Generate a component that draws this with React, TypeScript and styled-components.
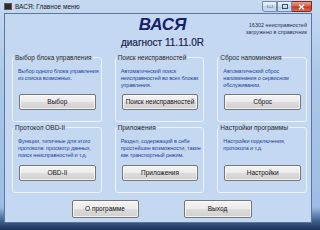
import React from 'react'
import styled, { createGlobalStyle } from 'styled-components'

const GlobalStyle = createGlobalStyle`
  html, body {
    margin: 0;
    padding: 0;
  }
  body {
    font-family: 'Liberation Sans', Arial, sans-serif;
  }
`

const Window = styled.div`
  width: 320px;
  height: 230px;
  box-sizing: border-box;
  display: grid;
  grid-template-rows: 13px 1fr;
  padding: 0 8px 7px 4px;
  overflow: hidden;
  background: linear-gradient(
    to bottom,
    #c6daf1 0%,
    #aac7e9 35%,
    #9dbde4 90%,
    #3f5f8f 96%,
    #1d3358 100%
  );
`

const TitleBar = styled.div`
  display: flex;
  align-items: center;
  gap: 3px;
  font-size: 6.5px;
  color: #1a1a1a;
`

const AppIcon = styled.span`
  width: 6px;
  height: 5px;
  background: #2b2b2b;
  border: 1px solid #5a5a5a;
`

const Caption = styled.span`
  flex: 1;
`

const Controls = styled.div`
  display: flex;
  align-self: flex-start;
  margin-top: 1px;
  height: 11px;
`

const ControlButton = styled.div<{ $w: number; $close?: boolean }>`
  width: ${({ $w }) => $w}px;
  box-sizing: border-box;
  display: flex;
  align-items: center;
  justify-content: center;
  border: 1px solid ${({ $close }) => ($close ? '#7a2a1e' : '#7089ab')};
  border-left-width: ${({ $close }) => ($close ? 0 : 1)}px;
  border-radius: ${({ $close }) => ($close ? '0 0 3px 0' : '0')};
  background: ${({ $close }) =>
    $close
      ? 'linear-gradient(to bottom, #e9a08f 0%, #d4644c 45%, #c23a22 55%, #d8705a 100%)'
      : 'linear-gradient(to bottom, #edf3fb 0%, #d3e1f3 45%, #b9cfea 55%, #cfe0f4 100%)'};
  &:first-child {
    border-left-width: 1px;
    border-radius: 0 0 0 3px;
  }
`

const Client = styled.div`
  background: #c5d8f1;
  border: 1px solid #5d7598;
  display: flex;
  flex-direction: column;
  padding: 0 4px 0 7px;
`

const Header = styled.div`
  height: 39.5px;
  display: grid;
  grid-template-columns: 1fr auto 1fr;
`

const TitleBlock = styled.div`
  grid-column: 2;
  display: flex;
  flex-direction: column;
  align-items: center;
  padding-left: 6px;
`

const AppName = styled.div`
  font-size: 17px;
  line-height: 17px;
  font-weight: bold;
  font-style: italic;
  color: #14206e;
  margin-top: 2px;
`

const Version = styled.div`
  font-size: 10px;
  line-height: 10px;
  color: #1b1f4f;
  margin-top: 5px;
  -webkit-text-stroke: 0.2px #1b1f4f;
`

const Info = styled.div`
  grid-column: 3;
  justify-self: end;
  text-align: right;
  font-size: 5.5px;
  line-height: 7px;
  color: #2a2f4a;
  margin-top: 7.5px;
  white-space: nowrap;
`

const Panels = styled.div`
  display: grid;
  grid-template-columns: repeat(3, 1fr);
  grid-template-rows: 68px 69px;
  column-gap: 13px;
  row-gap: 2px;
`

const Group = styled.fieldset`
  margin: 0;
  min-width: 0;
  box-sizing: border-box;
  border: 1px solid #edf3fc;
  border-radius: 3px;
  padding: 7px 4px 11px 5px;
  display: flex;
  flex-direction: column;
`

const Legend = styled.legend`
  font-size: 6.5px;
  line-height: 7px;
  color: #2a2a2a;
  padding: 0 1px;
  margin-left: -4px;
  white-space: nowrap;
`

const Description = styled.p`
  margin: 0;
  font-size: 5.5px;
  line-height: 7px;
  color: #2243a0;
  white-space: nowrap;
  letter-spacing: -0.1px;
`

const Button = styled.div<{ $w?: number; $h?: number }>`
  box-sizing: border-box;
  width: ${({ $w }) => ($w ? `${$w}px` : 'calc(100% - 2px)')};
  align-self: center;
  height: ${({ $h }) => $h || 16}px;
  margin-top: auto;
  display: flex;
  align-items: center;
  justify-content: center;
  font-size: 6.5px;
  color: #111;
  border: 1px solid #767676;
  border-radius: 2px;
  background: linear-gradient(to bottom, #f4f4f4 0%, #ebebeb 48%, #dcdcdc 52%, #d0d0d0 100%);
  box-shadow: inset 0 0 0 1px rgba(255, 255, 255, 0.7);
`

const Footer = styled.div`
  display: flex;
  justify-content: center;
  gap: 45px;
  margin-top: 7px;
  padding-left: 4px;
`

const groups = [
  {
    title: 'Выбор блока управления',
    text: ['Выбор одного блока управления', 'из списка возможных.'],
    button: 'Выбор',
  },
  {
    title: 'Поиск неисправностей',
    text: ['Автоматический поиск', 'неисправностей во всех блоках', 'управления.'],
    button: 'Поиск неисправностей',
  },
  {
    title: 'Сброс напоминания',
    text: ['Автоматический сброс', 'напоминания о сервисном', 'обслуживании.'],
    button: 'Сброс',
  },
  {
    title: 'Протокол OBD-II',
    text: ['Функции, типичные для этого', 'протокола: просмотр данных,', 'поиск неисправностей и т.д.'],
    button: 'OBD-II',
  },
  {
    title: 'Приложения',
    text: ['Раздел, содержащий в себе', 'простейшие возможности, такие', 'как транспортный режим.'],
    button: 'Приложения',
  },
  {
    title: 'Настройки программы',
    text: ['Настройки подключения,', 'протокола и т.д.'],
    button: 'Настройки',
  },
]

export default function App() {
  return (
    <>
      <GlobalStyle />
      <Window>
        <TitleBar>
          <AppIcon />
          <Caption>ВАСЯ: Главное меню</Caption>
          <Controls>
            <ControlButton $w={15}>
              <svg width="6" height="3" viewBox="0 0 6 3">
                <rect x="0" y="0" width="6" height="2" fill="#fff" stroke="#3a4f6e" strokeWidth="0.6" />
              </svg>
            </ControlButton>
            <ControlButton $w={15}>
              <svg width="6" height="5" viewBox="0 0 6 5">
                <rect x="0.5" y="0.5" width="5" height="4" fill="none" stroke="#3a4f6e" strokeWidth="1" />
              </svg>
            </ControlButton>
            <ControlButton $w={20} $close>
              <svg width="7" height="6" viewBox="0 0 7 6">
                <path d="M1 0.8 L6 5.2 M6 0.8 L1 5.2" stroke="#fff" strokeWidth="1.4" />
              </svg>
            </ControlButton>
          </Controls>
        </TitleBar>
        <Client>
          <Header>
            <TitleBlock>
              <AppName>ВАСЯ</AppName>
              <Version>диагност 11.11.0R</Version>
            </TitleBlock>
            <Info>
              16302 неисправностей
              <br />
              загружено в справочник
            </Info>
          </Header>
          <Panels>
            {groups.map((g) => (
              <Group key={g.title}>
                <Legend>{g.title}</Legend>
                <Description>
                  {g.text.map((line, i) => (
                    <React.Fragment key={i}>
                      {i > 0 && <br />}
                      {line}
                    </React.Fragment>
                  ))}
                </Description>
                <Button>{g.button}</Button>
              </Group>
            ))}
          </Panels>
          <Footer>
            <Button $w={67} $h={18}>О программе</Button>
            <Button $w={68} $h={18}>Выход</Button>
          </Footer>
        </Client>
      </Window>
    </>
  )
}
